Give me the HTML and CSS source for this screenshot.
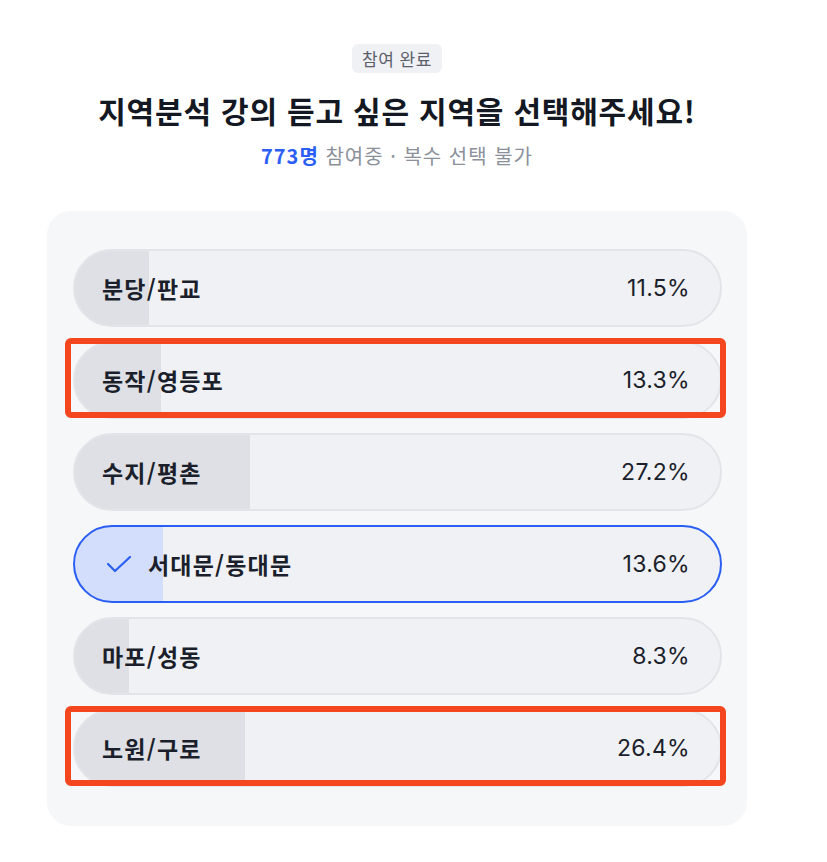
FILE: index.html
```html
<!DOCTYPE html>
<html lang="ko">
<head>
  <meta charset="UTF-8">
  <meta name="viewport" content="width=device-width, initial-scale=1.0">
  <title>지역분석 강의 투표</title>
  <link rel="stylesheet" href="styles.css">
</head>
<body>
  <div class="poll">
    <div class="poll-head">
      <span class="badge">참여 완료</span>
      <h2 class="title">지역분석 강의 듣고 싶은 지역을 선택해주세요!</h2>
      <p class="meta"><strong>773명</strong> 참여중 · 복수 선택 불가</p>
    </div>

    <ul class="options">
      <li class="option" style="--pct: 11.5%">
        <span class="label">분당/판교</span>
        <span class="pct">11.5%</span>
      </li>
      <li class="option marked" style="--pct: 13.3%">
        <span class="label">동작/영등포</span>
        <span class="pct">13.3%</span>
      </li>
      <li class="option" style="--pct: 27.2%">
        <span class="label">수지/평촌</span>
        <span class="pct">27.2%</span>
      </li>
      <li class="option selected" style="--pct: 13.6%">
        <svg class="check" width="26" height="18" viewBox="0 0 26 18">
          <polyline points="2,9 9,16 24,2" fill="none" stroke="#2b5ef2" stroke-width="2.2" stroke-linecap="round" stroke-linejoin="round"/>
        </svg>
        <span class="label">서대문/동대문</span>
        <span class="pct">13.6%</span>
      </li>
      <li class="option" style="--pct: 8.3%">
        <span class="label">마포/성동</span>
        <span class="pct">8.3%</span>
      </li>
      <li class="option marked" style="--pct: 26.4%">
        <span class="label">노원/구로</span>
        <span class="pct">26.4%</span>
      </li>
    </ul>
  </div>
</body>
</html>
```

FILE: styles.css
```css
body {
  margin: 0;
  background: #ffffff;
  font-family: Inter, "Noto Sans CJK KR", sans-serif;
  color: #1b1f2b;
}
.poll {
  width: 700px;
  margin-left: 47px;
  padding-top: 44px;
}
.poll-head {
  display: flex;
  flex-direction: column;
  align-items: center;
}
.badge {
  display: inline-block;
  height: 29px;
  line-height: 29px;
  padding: 0 10px;
  border-radius: 6px;
  background-color: #f0f1f4;
  color: #5b606b;
  font-family: "Noto Sans CJK KR", sans-serif;
  font-size: 17px;
  letter-spacing: 0.5px;
}
.title {
  margin: 18px 0 0;
  font-family: "Noto Sans CJK KR", sans-serif;
  font-size: 30px;
  line-height: 38px;
  font-weight: 700;
  letter-spacing: 0.8px;
  color: #141822;
}
.meta {
  margin: 13px 0 0;
  font-family: "Noto Sans CJK KR", sans-serif;
  font-size: 20px;
  line-height: 28px;
  letter-spacing: 1px;
  color: #8b909b;
}
.meta strong {
  color: #2b5ef5;
  font-weight: 700;
}
.options {
  list-style: none;
  margin: 41px 0 0;
  padding: 38px 25px 39px 26px;
  background-color: #f6f7f9;
  border-radius: 24px;
  display: flex;
  flex-direction: column;
  gap: 14px;
}
.option {
  position: relative;
  height: 78px;
  box-sizing: border-box;
  display: flex;
  align-items: center;
  padding: 0 30px 0 27px;
  border: 2px solid #e3e4e9;
  border-radius: 39px;
  background: linear-gradient(to right, #dfe0e5 var(--pct), #f0f1f4 var(--pct));
}
.label {
  flex: 1;
  font-family: "Noto Sans CJK KR", sans-serif;
  font-size: 23px;
  font-weight: 700;
  letter-spacing: 1.2px;
  color: #1b1f2b;
}
.pct {
  font-size: 23px;
  letter-spacing: 0.3px;
  color: #1b1f2b;
}
.option.selected {
  border-color: #2b5ef2;
  background: linear-gradient(to right, #d3defc var(--pct), #f0f1f4 var(--pct));
  padding-left: 31px;
}
.check {
  margin-right: 16px;
}
/* annotation frame drawn over the row */
.option.marked::after {
  content: "";
  position: absolute;
  top: -5px;
  left: -10px;
  right: -6px;
  bottom: -1px;
  border: 6px solid #f4471f;
  border-radius: 6px;
}
```
